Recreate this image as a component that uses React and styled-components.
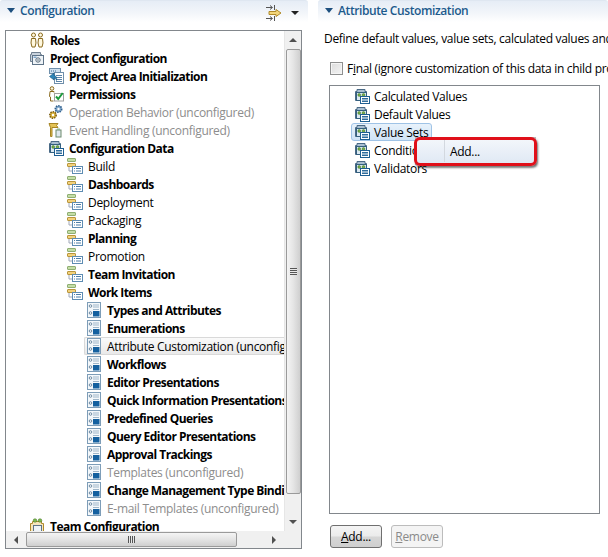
import React from "react";
import styled, { createGlobalStyle } from "styled-components";

const GlobalStyle = createGlobalStyle`
  html, body { margin: 0; padding: 0; background: #fff; }
  body { font-family: "Open Sans", "Noto Sans", sans-serif; font-size: 12px; color: #000; letter-spacing: -0.3px; }
`;

const Page = styled.div`
  width: 608px;
  height: 557px;
  display: flex;
  overflow: hidden;
  background: #fff;
`;

const LeftPanel = styled.section`
  width: 308px;
  flex: none;
  display: flex;
  flex-direction: column;
`;

const RightPanel = styled.section`
  position: relative;
  flex: 1;
  min-width: 0;
  margin-left: 10px;
  display: flex;
  flex-direction: column;
`;

const Header = styled.header`
  height: 22px;
  display: flex;
  align-items: center;
  padding: 0 9px 2px 7px;
  box-sizing: border-box;
  border-top: 1px solid #dfe7f1;
  border-radius: 3px 3px 0 0;
  background: linear-gradient(#e6edf6, #f3f6fa 60%, #fff);
`;

const Twisty = styled.span`
  width: 0;
  height: 0;
  margin-right: 5px;
  border-left: 4px solid transparent;
  border-right: 4px solid transparent;
  border-top: 5px solid #1d4f7e;
  flex: none;
`;

const Title = styled.h2`
  margin: 0;
  font-size: 12px;
  font-weight: 600;
  letter-spacing: -0.4px;
  color: #1c5a8c;
  flex: 1;
  white-space: nowrap;
`;

const ToolIcons = styled.div`
  display: flex;
  align-items: center;
  gap: 9px;
  margin-top: 5px;
`;

const MenuArrow = styled.span`
  width: 0;
  height: 0;
  border-left: 4px solid transparent;
  border-right: 4px solid transparent;
  border-top: 4px solid #222;
`;

const TreeBox = styled.div`
  margin: 8px 0 0 5px;
  width: 297px;
  height: 519px;
  box-sizing: border-box;
  border: 1px solid #82878c;
  display: grid;
  grid-template-columns: minmax(0, 1fr) 17px;
  grid-template-rows: minmax(0, 1fr) 17px;
`;

const TreeView = styled.div`
  overflow: hidden;
  min-width: 0;
`;

const Row = styled.div`
  height: 18px;
  display: flex;
  align-items: center;
  gap: 5px;
  box-sizing: border-box;
  padding-left: ${(p) => 23 + p.$level * 19}px;
  white-space: nowrap;
  font-weight: ${(p) => (p.$bold ? 700 : 400)};
  color: ${(p) => (p.$muted ? "#8d8d8d" : "#000")};
  letter-spacing: ${(p) => (p.$bold ? "-0.55px" : "-0.3px")};
`;

const SelectedBand = styled.span`
  display: inline-flex;
  align-items: center;
  gap: 5px;
  height: 18px;
  margin-left: -2px;
  padding-left: 1px;
  flex: 1;
  border: 1px solid #d9d9d9;
  border-right: 0;
  box-sizing: border-box;
  border-radius: 2px 0 0 2px;
  background: linear-gradient(#fafafa, #e9e9e9);
`;

const Label = styled.span``;

const VScroll = styled.div`
  display: flex;
  flex-direction: column;
  align-items: center;
  background: #f0f0f0;
  border-left: 1px solid #e6e6e6;
`;

const HScroll = styled.div`
  display: flex;
  align-items: center;
  background: #f0f0f0;
`;

const Corner = styled.div`
  background: #f0f0f0;
`;

const ArrowBtn = styled.span`
  flex: none;
  width: ${(p) => (p.$horizontal ? "20px" : "15px")};
  height: ${(p) => (p.$horizontal ? "17px" : "18px")};
  margin-${(p) => (p.$dir === "down" || p.$dir === "right" ? (p.$horizontal ? "left" : "top") : "right")}: ${(p) => (p.$dir === "down" || p.$dir === "right" ? "auto" : "0")};
  display: flex;
  align-items: center;
  justify-content: center;
  &::before {
    content: "";
    width: 0;
    height: 0;
    border-style: solid;
    border-color: transparent;
    ${(p) => p.$dir === "up" && "border-width: 0 4px 4px; border-bottom-color: #505050;"}
    ${(p) => p.$dir === "down" && "border-width: 4px 4px 0; border-top-color: #505050;"}
    ${(p) => p.$dir === "left" && "border-width: 4px 4px 4px 0; border-right-color: #505050;"}
    ${(p) => p.$dir === "right" && "border-width: 4px 0 4px 4px; border-left-color: #505050;"}
  }
`;

const VThumb = styled.div`
  width: 15px;
  height: 445px;
  box-sizing: border-box;
  border: 1px solid #9a9a9a;
  border-radius: 2px;
  background: linear-gradient(90deg, #f4f4f4, #e4e4e4 50%, #cfcfcf);
  display: flex;
  align-items: center;
  justify-content: center;
  &::after {
    content: "";
    width: 7px;
    height: 7px;
    background: repeating-linear-gradient(#555 0 1px, #e8e8e8 1px 2px);
  }
`;

const HThumb = styled.div`
  width: 211px;
  height: 15px;
  box-sizing: border-box;
  border: 1px solid #9a9a9a;
  border-radius: 2px;
  background: linear-gradient(#f4f4f4, #e4e4e4 50%, #cfcfcf);
  display: flex;
  align-items: center;
  justify-content: center;
  &::after {
    content: "";
    width: 7px;
    height: 7px;
    background: repeating-linear-gradient(90deg, #555 0 1px, #e8e8e8 1px 2px);
  }
`;

const Description = styled.p`
  margin: 8px 0 0 6px;
  height: 18px;
  line-height: 18px;
  white-space: nowrap;
`;

const FinalRow = styled.label`
  display: flex;
  align-items: center;
  gap: 4px;
  margin: 11px 0 0 12px;
  height: 18px;
  white-space: nowrap;
`;

const CheckBox = styled.span`
  width: 13px;
  height: 13px;
  flex: none;
  box-sizing: border-box;
  border: 1px solid #8e8f8f;
  background: linear-gradient(135deg, #dcdcdc, #f4f4f4);
  box-shadow: inset 0 0 0 1px #f5f5f5;
`;

const ListBox = styled.div`
  margin: 8px 0 0 11px;
  width: 271px;
  height: 429px;
  box-sizing: border-box;
  border: 1px solid #82878c;
  padding-top: 1px;
`;

const ListRow = styled.div`
  height: 18px;
  display: flex;
  align-items: center;
  padding-left: 24px;
  gap: 4px;
`;

const SelectedItem = styled.span`
  display: inline-flex;
  align-items: center;
  gap: 4px;
  height: 18px;
  box-sizing: border-box;
  margin-left: -3px;
  padding: 0 3px 0 2px;
  border: 1px solid #9fc3e6;
  border-radius: 3px;
  background: linear-gradient(#e8f2fb, #cfe3f6);
`;

const Buttons = styled.div`
  display: flex;
  gap: 9px;
  margin: 11px 0 0 12px;
`;

const Button = styled.button`
  width: 52px;
  height: 23px;
  padding: 0;
  font: inherit;
  letter-spacing: inherit;
  color: ${(p) => (p.disabled ? "#8a8a8a" : "#000")};
  border: 1px solid ${(p) => (p.disabled ? "#bcbcbc" : "#6f6f6f")};
  border-radius: 3px;
  background: ${(p) => p.disabled ? "#f4f4f4" : "linear-gradient(#f4f4f4, #ebebeb 48%, #d6d6d6 52%, #cfcfcf)"};
  u { text-underline-offset: 1px; }
`;

const ContextMenu = styled.div`
  position: absolute;
  left: 98px;
  top: 138px;
  width: 119px;
  height: 26px;
  box-sizing: border-box;
  display: flex;
  align-items: center;
  background: linear-gradient(#f4f7fb, #dfe8f4);
  box-shadow: 0 0 0 1px #b8b8b8, 2px 2px 3px rgba(0, 0, 0, 0.3);
`;

const MenuText = styled.span`
  margin-left: 34px;
`;

const MenuGutter = styled.span`
  position: absolute;
  left: 28px;
  top: 2px;
  bottom: 2px;
  width: 1px;
  background: #d3d8df;
`;

const Highlight = styled.div`
  position: absolute;
  left: -2px;
  top: -1px;
  right: -2px;
  bottom: -2px;
  border: 3px solid #e0101a;
  border-radius: 6px;
  box-shadow: 1px 2px 2px rgba(0, 0, 0, 0.45);
  pointer-events: none;
`;

const IconSvg = styled.svg`
  width: 16px;
  height: 16px;
  flex: none;
  display: block;
`;

// toolbar collapse/expand arrows
const SyncIcon = () => (
  <IconSvg viewBox="0 0 16 16">
    <path d="M0 2.5h6M4 0.5l2.5 2-2.5 2M8.5 0v5M0 13.5h6M4 11.5l2.5 2-2.5 2M8.5 11v5" fill="none" stroke="#555" />
    <path d="M3 6.5h7V4.5l5 3.5-5 3.5V9.5H3z" fill="#f3d67b" stroke="#b08a2a" />
  </IconSvg>
);

const RolesIcon = () => (
  <IconSvg viewBox="0 0 16 16">
    <g fill="#fff8df" stroke="#8a6a1d">
      <circle cx="4.5" cy="3" r="2" />
      <circle cx="11.5" cy="3" r="2" />
      <path d="M2.5 6.5h4l.5 4.5-1 4H3l-1-4zM9.5 6.5h4l.5 4.5-1 4h-3l-1-4z" />
    </g>
  </IconSvg>
);

const ProjectIcon = () => (
  <IconSvg viewBox="0 0 16 16">
    <path d="M1.5 4.5h1V2.5h9v2h1v7h-11z" fill="#c9d3dd" stroke="#6f7f8f" />
    <rect x="3.5" y="5.5" width="11" height="9" fill="#eef3f7" stroke="#5e7387" />
    <circle cx="9" cy="10" r="2.2" fill="none" stroke="#5a6b7a" />
    <circle cx="9" cy="10" r="0.8" fill="#5a6b7a" />
    <rect x="4.5" y="6.5" width="3" height="1.5" fill="#7ea6c9" />
  </IconSvg>
);

const TeamIcon = () => (
  <IconSvg viewBox="0 0 16 16">
    <path d="M1.5 5.5h2V3.5h9v2h2v9h-13z" fill="#f6e6bc" stroke="#b08a2a" />
    <circle cx="6" cy="2.5" r="1.8" fill="#7fb84e" stroke="#3c7020" strokeWidth=".5" />
    <circle cx="11" cy="2.5" r="1.8" fill="#7fb84e" stroke="#3c7020" strokeWidth=".5" />
    <rect x="4.5" y="7.5" width="8" height="6" fill="#eef3f7" stroke="#5e7387" />
  </IconSvg>
);

const InitIcon = () => (
  <IconSvg viewBox="0 0 16 16">
    <rect x="1.5" y="0.5" width="11" height="5" fill="#cfe1f0" stroke="#6f8fab" />
    <path d="M3 3h1M5 3h1M7 3h1" stroke="#3a6c96" />
    <rect x="6.5" y="4.5" width="9" height="11" fill="#fff" stroke="#6f8fab" />
    <path d="M8 7.5h6M8 9.5h6M8 11.5h6M8 13.5h6" stroke="#5b84a8" />
    <path d="M6 5L1.5 8.5 6 12V10c1.5 0 2 1 2.5 2.5.5-3-.5-5-2.5-5z" fill="#2f86b8" stroke="#14557f" strokeWidth=".6" />
  </IconSvg>
);

const PermIcon = () => (
  <IconSvg viewBox="0 0 16 16">
    <circle cx="4" cy="2.5" r="1.8" fill="#fff8df" stroke="#8a6a1d" />
    <path d="M2 5.5h4v1M2 5.5l-.5 5 1 .5v4h3" fill="none" stroke="#8a6a1d" />
    <rect x="6.5" y="7.5" width="9" height="7.5" fill="#fff" stroke="#a0a0a0" />
    <path d="M8 10.5l2.2 2.5 4.5-6" fill="none" stroke="#1c9a3c" strokeWidth="2" />
  </IconSvg>
);

const GearsIcon = () => (
  <IconSvg viewBox="0 0 16 16">
    <circle cx="10.5" cy="5" r="3.2" fill="#7fa6c9" stroke="#2f5f8d" strokeWidth="1.6" strokeDasharray="1.4 1" />
    <circle cx="10.5" cy="5" r="1.2" fill="#fff" />
    <circle cx="5" cy="11" r="3.2" fill="#d8b23e" stroke="#7e611a" strokeWidth="1.6" strokeDasharray="1.4 1" />
    <circle cx="5" cy="11" r="1.2" fill="#fff" />
  </IconSvg>
);

const EventIcon = () => (
  <IconSvg viewBox="0 0 16 16">
    <path d="M1 1.5h9l-1.5 2L10 5.5H4v9H2.5V5.5L1 1.5z" fill="#e3c255" stroke="#a68524" />
    <rect x="8" y="8" width="5" height="7" fill="#dfe8ee" stroke="#6d8a6d" />
    <path d="M9 6.5h3V8H9z" fill="#8fb58f" />
  </IconSvg>
);

const DataIcon = () => (
  <IconSvg viewBox="0 0 16 16">
    <path d="M1.5 3.5h1.5V1.5h8v2h1.5v9h-11z" fill="#a9bfd2" stroke="#4a6a86" />
    <rect x="2.5" y="4.5" width="10" height="8" fill="#dce9f2" stroke="#35607f" />
    <circle cx="5.2" cy="7" r="1.4" fill="#77b04a" stroke="#3c7020" strokeWidth=".5" />
    <circle cx="9.5" cy="7" r="1.4" fill="#77b04a" stroke="#3c7020" strokeWidth=".5" />
    <rect x="6.5" y="8.5" width="9" height="7" fill="#fff" stroke="#1f5f92" />
    <path d="M8 10.5h6M8 12h6M8 13.5h6" stroke="#2e6c9c" />
  </IconSvg>
);

const CategoryIcon = () => (
  <IconSvg viewBox="0 0 16 16">
    <rect x="0.5" y="0.5" width="8" height="3" rx=".5" fill="#c4dda6" stroke="#8fae72" />
    <rect x="0.5" y="5.5" width="8" height="3" rx=".5" fill="#f3d27c" stroke="#b9963c" />
    <path d="M2 9v4h3" fill="none" stroke="#a0a8b8" />
    <rect x="5.5" y="8.5" width="10" height="7" fill="#fff" stroke="#5f8db3" />
    <path d="M7 10.5h1M9 10.5h5M7 13h1M9 13h5" stroke="#4d7fa8" />
  </IconSvg>
);

const LeafIcon = () => (
  <IconSvg viewBox="0 0 16 16">
    <rect x="1.5" y="0.5" width="13" height="15" fill="#f4f8fb" stroke="#7d9db8" />
    <circle cx="4.5" cy="4" r="1.3" fill="none" stroke="#6f8ba3" />
    <path d="M7 3h6M7 5h6" stroke="#9fb6c9" />
    <circle cx="4.5" cy="11" r="1.3" fill="none" stroke="#6f8ba3" />
    <path d="M7 7.5h6" stroke="#9fb6c9" />
    <rect x="7" y="9" width="6.5" height="5.5" fill="#14609f" />
  </IconSvg>
);

const icons = {
  roles: RolesIcon,
  project: ProjectIcon,
  team: TeamIcon,
  init: InitIcon,
  perm: PermIcon,
  gears: GearsIcon,
  event: EventIcon,
  data: DataIcon,
  category: CategoryIcon,
  leaf: LeafIcon,
};

const treeRows = [
  { level: 0, icon: "roles", text: "Roles", bold: true },
  { level: 0, icon: "project", text: "Project Configuration", bold: true },
  { level: 1, icon: "init", text: "Project Area Initialization", bold: true },
  { level: 1, icon: "perm", text: "Permissions", bold: true },
  { level: 1, icon: "gears", text: "Operation Behavior (unconfigured)", muted: true },
  { level: 1, icon: "event", text: "Event Handling (unconfigured)", muted: true },
  { level: 1, icon: "data", text: "Configuration Data", bold: true },
  { level: 2, icon: "category", text: "Build" },
  { level: 2, icon: "category", text: "Dashboards", bold: true },
  { level: 2, icon: "category", text: "Deployment" },
  { level: 2, icon: "category", text: "Packaging" },
  { level: 2, icon: "category", text: "Planning", bold: true },
  { level: 2, icon: "category", text: "Promotion" },
  { level: 2, icon: "category", text: "Team Invitation", bold: true },
  { level: 2, icon: "category", text: "Work Items", bold: true },
  { level: 3, icon: "leaf", text: "Types and Attributes", bold: true },
  { level: 3, icon: "leaf", text: "Enumerations", bold: true },
  { level: 3, icon: "leaf", text: "Attribute Customization (unconfigured)", selected: true },
  { level: 3, icon: "leaf", text: "Workflows", bold: true },
  { level: 3, icon: "leaf", text: "Editor Presentations", bold: true },
  { level: 3, icon: "leaf", text: "Quick Information Presentations", bold: true },
  { level: 3, icon: "leaf", text: "Predefined Queries", bold: true },
  { level: 3, icon: "leaf", text: "Query Editor Presentations", bold: true },
  { level: 3, icon: "leaf", text: "Approval Trackings", bold: true },
  { level: 3, icon: "leaf", text: "Templates (unconfigured)", muted: true },
  { level: 3, icon: "leaf", text: "Change Management Type Bindings", bold: true },
  { level: 3, icon: "leaf", text: "E-mail Templates (unconfigured)", muted: true },
  { level: 0, icon: "team", text: "Team Configuration", bold: true },
];

const listRows = ["Calculated Values", "Default Values", "Value Sets", "Conditions", "Validators"];

export default function App() {
  return (
    <Page>
      <GlobalStyle />
      <LeftPanel>
        <Header>
          <Twisty />
          <Title>Configuration</Title>
          <ToolIcons>
            <SyncIcon />
            <MenuArrow />
          </ToolIcons>
        </Header>
        <TreeBox>
          <TreeView>
            {treeRows.map((row) => {
              const Icon = icons[row.icon];
              return (
                <Row key={row.text} $level={row.level} $bold={row.bold} $muted={row.muted}>
                  {row.selected ? (
                    <SelectedBand>
                      <Icon />
                      <Label>{row.text}</Label>
                    </SelectedBand>
                  ) : (
                    <>
                      <Icon />
                      <Label>{row.text}</Label>
                    </>
                  )}
                </Row>
              );
            })}
          </TreeView>
          <VScroll>
            <ArrowBtn $dir="up" />
            <VThumb />
            <ArrowBtn $dir="down" />
          </VScroll>
          <HScroll>
            <ArrowBtn $dir="left" $horizontal />
            <HThumb />
            <ArrowBtn $dir="right" $horizontal />
          </HScroll>
          <Corner />
        </TreeBox>
      </LeftPanel>
      <RightPanel>
        <Header>
          <Twisty />
          <Title>Attribute Customization</Title>
        </Header>
        <Description>Define default values, value sets, calculated values and validators for attributes.</Description>
        <FinalRow>
          <CheckBox />
          <span>
            F<u>i</u>nal (ignore customization of this data in child project areas)
          </span>
        </FinalRow>
        <ListBox>
          {listRows.map((text) => (
            <ListRow key={text}>
              {text === "Value Sets" ? (
                <SelectedItem>
                  <DataIcon />
                  {text}
                </SelectedItem>
              ) : (
                <>
                  <DataIcon />
                  {text}
                </>
              )}
            </ListRow>
          ))}
        </ListBox>
        <Buttons>
          <Button>
            <u>A</u>dd...
          </Button>
          <Button disabled>
            <u>R</u>emove
          </Button>
        </Buttons>
        <ContextMenu>
          <MenuGutter />
          <MenuText>Add...</MenuText>
          <Highlight />
        </ContextMenu>
      </RightPanel>
    </Page>
  );
}
